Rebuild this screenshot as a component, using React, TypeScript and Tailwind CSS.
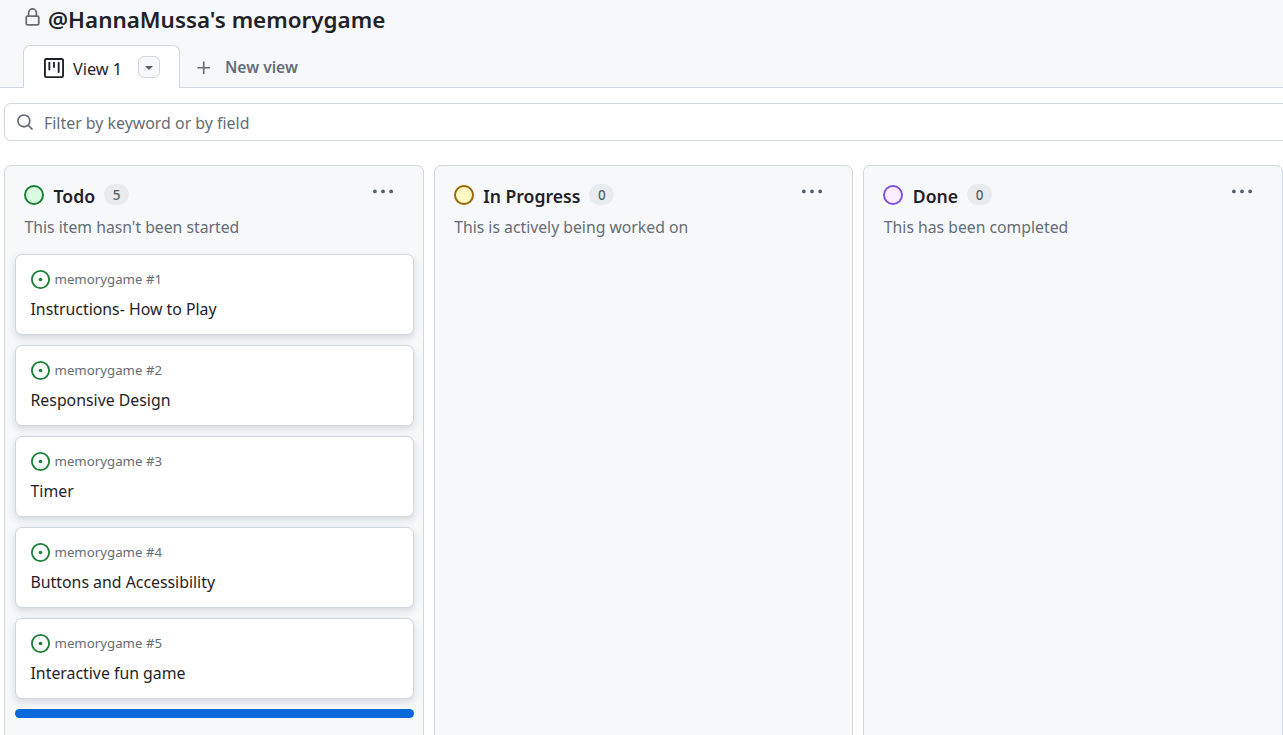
const columns = [
	{ name: "Todo", count: 5, note: "This item hasn't been started", ring: "border-[#1a7f37] bg-[#dafbe1]" },
	{ name: "In Progress", count: 0, note: "This is actively being worked on", ring: "border-[#9a6700] bg-[#fff8c5]" },
	{ name: "Done", count: 0, note: "This has been completed", ring: "border-[#8250df] bg-[#fbefff]" },
];

const items = [
	{ id: 1, title: "Instructions- How to Play" },
	{ id: 2, title: "Responsive Design" },
	{ id: 3, title: "Timer" },
	{ id: 4, title: "Buttons and Accessibility" },
	{ id: 5, title: "Interactive fun game" },
];

const Card = ({ id, title }: { id: number; title: string }) => (
	<div className="h-[81px] rounded-[7px] border border-[#d0d7de] bg-white pl-[14.5px] pt-[15px] shadow-[0_3px_6px_rgba(140,149,159,0.3)]">
		<div className="flex h-[19px] items-center gap-[5px]">
			<svg viewBox="0 0 16 16" className="h-[19px] w-[19px] fill-[#1a7f37]">
				<path d="M8 9.5a1.5 1.5 0 1 0 0-3 1.5 1.5 0 0 0 0 3Z" />
				<path d="M8 0a8 8 0 1 1 0 16A8 8 0 0 1 8 0ZM1.5 8a6.5 6.5 0 1 0 13 0 6.5 6.5 0 0 0-13 0Z" />
			</svg>
			<span className="text-[13.25px] text-[#656d76]">memorygame #{id}</span>
		</div>
		<p className="mt-[9px] text-[15.85px] leading-[22px] text-[#1f2328]">{title}</p>
	</div>
);

const Column = ({ column }: { column: (typeof columns)[number] }) => (
	<div className="flex h-[580px] w-[420px] flex-col rounded-t-[7px] border border-[#d0d7de] bg-[#f6f8fa] pl-[10px] pr-[9px]">
		<div className="flex h-[50px] items-start pl-[9px] pr-[21px] pt-[17px]">
			<span className={`mt-[2px] h-[20px] w-[20px] rounded-full border-2 ${column.ring}`} />
			<h2 className="ml-[9.5px] text-[17.6px] leading-[26px] font-semibold text-[#1f2328]">{column.name}</h2>
			<span className="mt-[1px] ml-[9px] flex h-[21px] min-w-[25px] items-center justify-center rounded-full bg-[#e9ecef] pt-[1px] text-[13.5px] font-medium text-[#57606a]">
				{column.count}
			</span>
			<svg viewBox="0 0 16 16" className="mt-[-1px] ml-auto h-[20px] w-[20px] fill-[#57606a]">
				<path d="M8 9a1.5 1.5 0 1 0 0-3 1.5 1.5 0 0 0 0 3ZM1.5 9a1.5 1.5 0 1 0 0-3 1.5 1.5 0 0 0 0 3Zm13 0a1.5 1.5 0 1 0 0-3 1.5 1.5 0 0 0 0 3Z" />
			</svg>
		</div>
		<p className="pl-[9.5px] text-[15.75px] leading-[22px] text-[#656d76]">{column.note}</p>
		{column.name === "Todo" && (
			<div className="mt-[16px] flex flex-col gap-[10px]">
				{items.map((item) => (
					<Card key={item.id} id={item.id} title={item.title} />
				))}
				<div className="h-[9px] rounded-full bg-[#0969da]" />
			</div>
		)}
	</div>
);

export default function App() {
	return (
		<div className="h-[735px] w-[1283px] overflow-hidden bg-white font-['Noto_Sans',sans-serif]">
			<div className="h-[88px] border-b border-[#d0d7de] bg-[#f6f8fa] pl-[23px]">
				<div className="flex h-[45px] items-start">
					<svg viewBox="0 0 16 16" className="mt-[8px] h-[19px] w-[19px] fill-[#656d76]">
						<path d="M4 4a4 4 0 0 1 8 0v2h.25c.966 0 1.75.784 1.75 1.75v5.5A1.75 1.75 0 0 1 12.25 15h-8.5A1.75 1.75 0 0 1 2 13.25v-5.5C2 6.784 2.784 6 3.75 6H4Zm8.25 3.5h-8.5a.25.25 0 0 0-.25.25v5.5c0 .138.112.25.25.25h8.5a.25.25 0 0 0 .25-.25v-5.5a.25.25 0 0 0-.25-.25ZM10.5 6V4a2.5 2.5 0 1 0-5 0v2Z" />
					</svg>
					<h1 className="mt-[4px] ml-[6px] text-[22.4px] leading-[32px] font-semibold text-[#1f2328]">
						@HannaMussa's memorygame
					</h1>
				</div>
				<div className="flex h-[43px] items-start">
					<div className="flex h-[43px] w-[157px] items-center rounded-t-[7px] border border-b-0 border-[#d0d7de] bg-white pl-[20px]">
						<svg viewBox="0 0 16 16" className="mt-[1px] h-[20px] w-[20px] fill-[#1f2328]">
							<path d="M0 1.75C0 .784.784 0 1.75 0h12.5C15.216 0 16 .784 16 1.75v12.5A1.75 1.75 0 0 1 14.25 16H1.75A1.75 1.75 0 0 1 0 14.25Zm1.75-.25a.25.25 0 0 0-.25.25v12.5c0 .138.112.25.25.25h12.5a.25.25 0 0 0 .25-.25V1.75a.25.25 0 0 0-.25-.25ZM11.75 3a.75.75 0 0 1 .75.75v7.5a.75.75 0 0 1-1.5 0v-7.5a.75.75 0 0 1 .75-.75Zm-8.25.75a.75.75 0 0 1 1.5 0v5.5a.75.75 0 0 1-1.5 0ZM8 3a.75.75 0 0 1 .75.75v3.5a.75.75 0 0 1-1.5 0v-3.5A.75.75 0 0 1 8 3Z" />
						</svg>
						<span className="mt-[5px] ml-[9px] text-[16.3px] text-[#1f2328]">View 1</span>
						<span className="mb-[1px] ml-[16px] flex h-[22px] w-[22px] items-center justify-center rounded-[6px] border border-[#d0d7de] bg-[#f6f8fa]">
							<svg viewBox="0 0 16 16" className="h-[16px] w-[16px] fill-[#57606a]">
								<path d="m4.427 7.427 3.396 3.396a.25.25 0 0 0 .354 0l3.396-3.396A.25.25 0 0 0 11.396 7H4.604a.25.25 0 0 0-.177.427Z" />
							</svg>
						</span>
					</div>
					<div className="ml-[15px] flex h-[43px] items-center pt-[2px]">
						<svg viewBox="0 0 16 16" className="h-[18px] w-[18px] fill-[#656d76]">
							<path d="M7.75 2a.75.75 0 0 1 .75.75V7h4.25a.75.75 0 0 1 0 1.5H8.5v4.25a.75.75 0 0 1-1.5 0V8.5H2.75a.75.75 0 0 1 0-1.5H7V2.75A.75.75 0 0 1 7.75 2Z" />
						</svg>
						<span className="ml-[12px] text-[15.6px] font-semibold text-[#656d76]">New view</span>
					</div>
				</div>
			</div>
			<div className="pl-[4px]">
				<div className="mt-[15px] flex h-[38px] w-[1290px] items-center rounded-[7px] border border-[#d0d7de] bg-white pl-[11px]">
					<svg viewBox="0 0 16 16" className="h-[18px] w-[18px] fill-[#656d76]">
						<path d="M10.68 11.74a6 6 0 0 1-7.922-8.982 6 6 0 0 1 8.982 7.922l3.04 3.04a.749.749 0 0 1-.326 1.275.749.749 0 0 1-.734-.215ZM11.5 7a4.499 4.499 0 1 0-8.997 0A4.499 4.499 0 0 0 11.5 7Z" />
					</svg>
					<span className="mt-[3px] ml-[10px] text-[15.9px] text-[#656d76]">Filter by keyword or by field</span>
				</div>
				<div className="mt-[24px] flex gap-[10px]">
					{columns.map((column) => (
						<Column key={column.name} column={column} />
					))}
				</div>
			</div>
		</div>
	);
}
